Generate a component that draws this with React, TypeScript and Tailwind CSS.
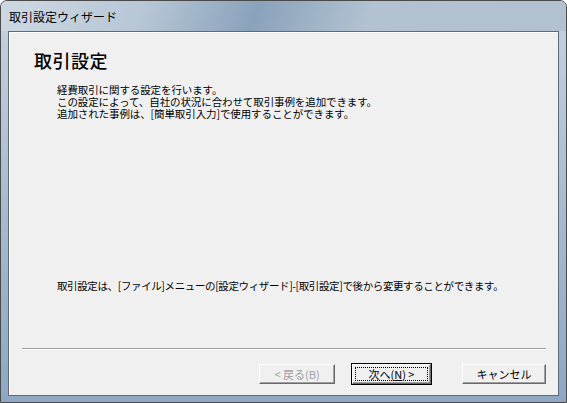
import React from "react";

const jp = { fontFamily: '"Noto Sans CJK JP", "Noto Sans", sans-serif' };

function Button({
  label,
  disabled,
  isDefault,
}: {
  label: React.ReactNode;
  disabled?: boolean;
  isDefault?: boolean;
}) {
  return (
    <div
      className={
        "h-[22px] " +
        (isDefault ? "border border-black" : "border border-transparent")
      }
    >
      <div className="flex h-full w-full border-t border-l border-white border-b-[#696969] border-r-[#696969] border-b border-r bg-[#f0f0f0] shadow-[inset_-1px_-1px_0_#a0a0a0]">
        <div
          className={
            "m-[2px] flex flex-1 items-center justify-center text-[11px] leading-none " +
            (isDefault ? "outline-1 outline-dotted outline-black -outline-offset-1" : "") +
            (disabled ? " text-[#a0a0a0]" : " text-black")
          }
        >
          {label}
        </div>
      </div>
    </div>
  );
}

export default function App() {
  return (
    <div
      className="flex h-[403px] w-[567px] flex-col overflow-hidden rounded-t-[7px] border border-[#4a4a4a] bg-gradient-to-b from-[#c5d3e1] via-[#a9bbcf] to-[#8ea8c3]"
      style={jp}
    >
      <div className="relative flex h-[30px] shrink-0 items-center overflow-hidden pl-[8px]">
        <div className="absolute inset-0 bg-[linear-gradient(110deg,#cdd8e3_0%,#b7c7d6_25%,#8aa2bb_45%,#b2c2d1_65%,#b1c1d0_100%)]" />
        <span className="relative pt-[2px] text-[12px] leading-none text-black">取引設定ウィザード</span>
      </div>
      <div className="mx-[7px] mb-[6px] flex flex-1 flex-col border border-[#5d6b78]">
        <div className="flex flex-1 flex-col border-t border-l border-white bg-[#f0f0f0]">
          <div className="pl-[24px] pt-[18px] text-[18px] font-medium leading-none tracking-[0.5px] text-black">
            取引設定
          </div>
          <div className="pl-[47px] pt-[15px] text-[10.5px] leading-[12px] tracking-[-0.1px] text-black">
            <div>経費取引に関する設定を行います。</div>
            <div>この設定によって、自社の状況に合わせて取引事例を追加できます。</div>
            <div>追加された事例は、[簡単取引入力]で使用することができます。</div>
          </div>
          <div className="flex-1" />
          <div className="pl-[47px] text-[10.5px] leading-[12px] tracking-[-0.38px] text-black">
            取引設定は、[ファイル]メニューの[設定ウィザード]-[取引設定]で後から変更することができます。
          </div>
          <div className="mx-[12px] mt-[56px] h-[2px] border-t border-[#a0a0a0] border-b-white border-b" />
          <div className="flex justify-end pr-[11px] pt-[13px] pb-[10px]">
            <div className="w-[78px]">
              <Button label="< 戻る(B)" disabled />
            </div>
            <div className="ml-[15px] w-[81px]">
              <Button
                isDefault
                label={
                  <span>
                    次へ(<span className="underline">N</span>) &gt;
                  </span>
                }
              />
            </div>
            <div className="ml-[29px] w-[86px]">
              <Button label="キャンセル" />
            </div>
          </div>
        </div>
      </div>
    </div>
  );
}
